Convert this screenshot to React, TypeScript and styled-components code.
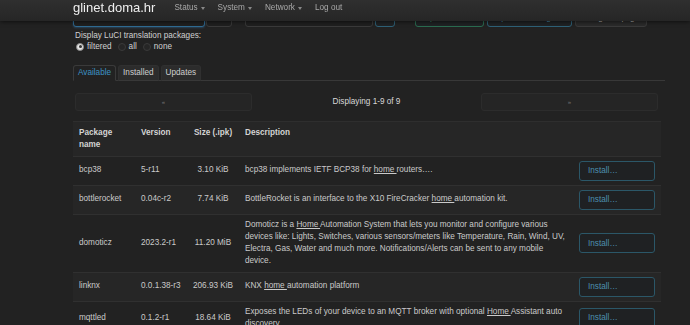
import React from "react";
import styled, { createGlobalStyle } from "styled-components";

const Global = createGlobalStyle`
  html, body { margin: 0; padding: 0; overflow: hidden; background: #222; }
  body { font-family: "Liberation Sans", Arial, sans-serif; font-size: 8.2px; color: #ccc; line-height: 12.25px; }
  * { box-sizing: border-box; }
`;

/* fixed navbar that lies over the scrolled page */
const Header = styled.header`
  position: fixed;
  top: 0;
  left: 0;
  width: 100%;
  height: 21px;
  padding: 0 0 5px 73px;
  display: flex;
  align-items: center;
  background-color: #2a2a2a;
  background-image: linear-gradient(#2f2f2f, #262626);
  box-shadow: 0 1px 4px rgba(0, 0, 0, 0.55);
  z-index: 100;
`;

const Brand = styled.div`
  font-size: 13px;
  color: #eee;
  margin-right: 19px;
  line-height: 16px;
`;

const Nav = styled.nav`
  display: flex;
  gap: 13px;
`;

const NavItem = styled.span`
  color: #a8a8a8;
  display: flex;
  align-items: center;
  gap: 3px;
`;

const Caret = styled.span`
  width: 0;
  height: 0;
  border-left: 2.5px solid transparent;
  border-right: 2.5px solid transparent;
  border-top: 3px solid #888;
  margin-top: 1px;
`;

const Page = styled.main`
  padding: 7px 0 0 73px;
  width: 665px;
`;

const Controls = styled.div`
  display: flex;
  height: 20px;
`;

const Field = styled.div<{ $w: number; $ml?: number; $focus?: boolean }>`
  width: ${(p) => p.$w}px;
  margin-left: ${(p) => p.$ml ?? 0}px;
  height: 20px;
  border: 1px solid ${(p) => (p.$focus ? "#2f6a92" : "#3a3a3a")};
  border-radius: 3px;
  background: #1f1f1f;
  box-shadow: ${(p) => (p.$focus ? "0 1px 2px rgba(60,130,190,.35)" : "none")};
  color: #aaa;
  display: flex;
  align-items: center;
  justify-content: center;
  padding-top: 3px;
`;

const CtlButton = styled.div<{ $w: number; $ml: number; $tone: "blue" | "green" | "grey" }>`
  width: ${(p) => p.$w}px;
  margin-left: ${(p) => p.$ml}px;
  height: 20px;
  border: 1px solid ${(p) => (p.$tone === "blue" ? "#2e6076" : p.$tone === "green" ? "#2a6b50" : "#3a3a3a")};
  border-radius: 3px;
  background: ${(p) => (p.$tone === "grey" ? "#2a2a2a" : "#1f2224")};
  color: ${(p) => (p.$tone === "blue" ? "#4d93b3" : p.$tone === "green" ? "#3f9a70" : "#bbb")};
  display: flex;
  align-items: center;
  justify-content: center;
  padding-top: 3px;
`;

const Label = styled.div`
  margin-top: 3px;
  line-height: 11px;
  padding-left: 2px;
  color: #d0d0d0;
`;

const RadioRow = styled.div`
  display: flex;
  align-items: center;
  line-height: 11px;
  padding-left: 3px;
  color: #d0d0d0;
`;

const RadioOpt = styled.label`
  display: flex;
  align-items: center;
  gap: 3px;
  margin-right: 6px;
`;

const RadioDot = styled.span<{ $on?: boolean }>`
  width: 8px;
  height: 8px;
  border-radius: 50%;
  border: 1px solid ${(p) => (p.$on ? "#888" : "#3a3a3a")};
  background: ${(p) => (p.$on ? "#e4e4e4" : "#262626")};
  display: flex;
  align-items: center;
  justify-content: center;
  &::after {
    content: "";
    width: 3px;
    height: 3px;
    border-radius: 50%;
    background: ${(p) => (p.$on ? "#333" : "transparent")};
  }
`;

const Tabs = styled.ul`
  list-style: none;
  margin: 13px 0 0;
  padding: 0;
  width: 592px;
  height: 16px;
  display: flex;
  gap: 2px;
  border-bottom: 1px solid #383838;
`;

const Tab = styled.li<{ $active?: boolean }>`
  height: 16px;
  padding: 0 4px;
  display: flex;
  align-items: center;
  border: 1px solid ${(p) => (p.$active ? "#3a3a3a" : "#303030")};
  border-bottom-color: ${(p) => (p.$active ? "#222" : "#383838")};
  border-radius: 3px 3px 0 0;
  background: ${(p) => (p.$active ? "#222" : "#2c2c2c")};
  color: ${(p) => (p.$active ? "#3d93c4" : "#cfcfcf")};
`;

const Pager = styled.div`
  margin-top: 12px;
  width: 588px;
  padding: 0 3px 0 2px;
  display: flex;
  align-items: center;
  justify-content: space-between;
`;

const PageBtn = styled.div`
  width: 177px;
  height: 18px;
  border: 1px solid #2c2c2c;
  border-radius: 3px;
  background: #252525;
  color: #777;
  font-size: 6px;
  display: flex;
  align-items: center;
  justify-content: center;
`;

const PageInfo = styled.span`
  color: #d8d8d8;
`;

const Table = styled.table`
  margin-top: 10px;
  width: 588px;
  border-collapse: collapse;
  table-layout: fixed;
`;

const Th = styled.th<{ $w: number; $center?: boolean }>`
  width: ${(p) => p.$w}px;
  padding: 4.5px 6px;
  text-align: ${(p) => (p.$center ? "center" : "left")};
  vertical-align: top;
  font-weight: bold;
  color: #d4d4d4;
`;

const HeadRow = styled.tr`
  background: #262626;
  border-top: 1px solid #2e2e2e;
`;

const Row = styled.tr<{ $alt?: boolean }>`
  background: ${(p) => (p.$alt ? "#262626" : "#222")};
  border-top: 1px solid #303030;
`;

const Td = styled.td<{ $center?: boolean }>`
  padding: 4px ${(p) => (p.$center ? 2 : 6)}px;
  vertical-align: middle;
  white-space: ${(p) => (p.$center ? "nowrap" : "normal")};
  text-align: ${(p) => (p.$center ? "center" : "left")};
  color: #cacaca;
`;

const U = styled.span`
  text-decoration: underline;
`;

const InstallBtn = styled.button`
  width: 76px;
  height: 20px;
  padding: 0 0 0 8px;
  text-align: left;
  border: 1px solid #2b5768;
  border-radius: 3px;
  background: #1f2123;
  color: #4d90ae;
  font-family: inherit;
  font-size: 8.2px;
  display: block;
`;

type Pkg = { name: string; ver: string; size: string; desc: React.ReactNode };

const pkgs: Pkg[] = [
  { name: "bcp38", ver: "5-r11", size: "3.10 KiB", desc: <>bcp38 implements IETF BCP38 for <U>home </U>routers….</> },
  { name: "bottlerocket", ver: "0.04c-r2", size: "7.74 KiB", desc: <>BottleRocket is an interface to the X10 FireCracker <U>home </U>automation kit.</> },
  {
    name: "domoticz",
    ver: "2023.2-r1",
    size: "11.20 MiB",
    desc: (
      <>
        Domoticz is a <U>Home </U>Automation System that lets you monitor and configure various devices like: Lights,
        Switches, various sensors/meters like Temperature, Rain, Wind, UV, Electra, Gas, Water and much more.
        Notifications/Alerts can be sent to any mobile device.
      </>
    ),
  },
  { name: "linknx", ver: "0.0.1.38-r3", size: "206.93 KiB", desc: <>KNX <U>home </U>automation platform</> },
  {
    name: "mqttled",
    ver: "0.1.2-r1",
    size: "18.64 KiB",
    desc: <>Exposes the LEDs of your device to an MQTT broker with optional <U>Home </U>Assistant auto discovery</>,
  },
];

export default function App() {
  return (
    <>
      <Global />
      <Header>
        <Brand>glinet.doma.hr</Brand>
        <Nav>
          <NavItem>Status <Caret /></NavItem>
          <NavItem>System <Caret /></NavItem>
          <NavItem>Network <Caret /></NavItem>
          <NavItem>Log out</NavItem>
        </Nav>
      </Header>
      <Page>
        <Controls>
          <Field $w={132} $focus />
          <Field $w={26} $ml={1}>Clear</Field>
          <Field $w={128} $ml={13}>-</Field>
          <CtlButton $w={20} $ml={2} $tone="blue">OK</CtlButton>
          <CtlButton $w={69} $ml={20} $tone="green">Update lists…</CtlButton>
          <CtlButton $w={85} $ml={3} $tone="blue">Upload Package…</CtlButton>
          <CtlButton $w={72} $ml={3} $tone="grey">Configure opkg…</CtlButton>
        </Controls>
        <Label>Display LuCI translation packages:</Label>
        <RadioRow>
          <RadioOpt><RadioDot $on />filtered</RadioOpt>
          <RadioOpt><RadioDot />all</RadioOpt>
          <RadioOpt><RadioDot />none</RadioOpt>
        </RadioRow>
        <Tabs>
          <Tab $active>Available</Tab>
          <Tab>Installed</Tab>
          <Tab>Updates</Tab>
        </Tabs>
        <Pager>
          <PageBtn>«</PageBtn>
          <PageInfo>Displaying 1-9 of 9</PageInfo>
          <PageBtn>»</PageBtn>
        </Pager>
        <Table>
          <thead>
            <HeadRow>
              <Th $w={62}>Package name</Th>
              <Th $w={52}>Version</Th>
              <Th $w={52} $center>Size (.ipk)</Th>
              <Th $w={334}>Description</Th>
              <Th $w={88}></Th>
            </HeadRow>
          </thead>
          <tbody>
            {pkgs.map((p, i) => (
              <Row key={p.name} $alt={i % 2 === 1}>
                <Td>{p.name}</Td>
                <Td>{p.ver}</Td>
                <Td $center>{p.size}</Td>
                <Td>{p.desc}</Td>
                <Td><InstallBtn>Install…</InstallBtn></Td>
              </Row>
            ))}
          </tbody>
        </Table>
      </Page>
    </>
  );
}
